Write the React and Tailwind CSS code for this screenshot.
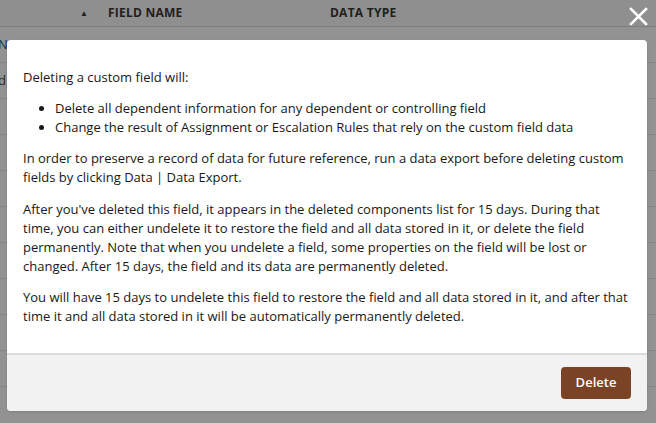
import { useState } from 'react'

const ROWS = Array.from({ length: 10 })

export default function App() {
  const [open, setOpen] = useState(true)

  return (
    <div className="relative w-[656px] h-[423px] overflow-hidden bg-white text-[#3e3e3c] font-['Open_Sans',sans-serif]">
      {/* Table behind the modal */}
      <div className="flex h-[27px] items-center border-b border-[#d8d8d8] bg-[#fafaf9] text-[12px] font-bold uppercase tracking-[0.02em] text-[#2b2826]">
        <span className="ml-[80px] w-[28px] text-[8px]">▲</span>
        <span className="w-[222px]">Field Name</span>
        <span>Data Type</span>
      </div>
      {ROWS.map((_, i) => (
        <div key={i} className="flex h-[36px] items-center border-b border-[#e5e5e5] text-[13px]">
          <span className="-ml-[2px] w-[108px]">{i === 0 ? 'N' : i === 1 ? 'd' : ''}</span>
        </div>
      ))}

      {/* Backdrop */}
      <div className="absolute inset-0 bg-[rgba(24,24,24,0.47)]" />

      <button onClick={() => setOpen(!open)} className="absolute right-[8px] top-[7px] text-white">
        <svg width="19" height="19" viewBox="0 0 19 19">
          <path d="M2 2 L17 17 M17 2 L2 17" stroke="white" strokeWidth="2.6" strokeLinecap="square" />
        </svg>
      </button>

      {/* Modal */}
      <div className="absolute left-[7px] top-[40px] w-[640px] h-[371px] flex flex-col rounded-[4px] bg-white overflow-hidden shadow-sm">
        <div className="flex-1 px-[16px] pt-[28px] text-[13px] leading-[19px] text-[#181818]">
          <p>Deleting a custom field will:</p>
          <ul className="mt-[12px] ml-[32px] list-disc">
            <li>Delete all dependent information for any dependent or controlling field</li>
            <li>Change the result of Assignment or Escalation Rules that rely on the custom field data</li>
          </ul>
          <p className="mt-[12px]">
            In order to preserve a record of data for future reference, run a data export before deleting custom fields by clicking Data | Data Export.
          </p>
          <p className="mt-[13px]">
            After you've deleted this field, it appears in the deleted components list for 15 days. During that time, you can either undelete it to restore the field and all data stored in it, or delete the field permanently. Note that when you undelete a field, some properties on the field will be lost or changed. After 15 days, the field and its data are permanently deleted.
          </p>
          <p className="mt-[12px]">
            You will have 15 days to undelete this field to restore the field and all data stored in it, and after that time it and all data stored in it will be automatically permanently deleted.
          </p>
        </div>
        <div className="flex h-[58px] items-center justify-end border-t-2 border-[#dddbda] bg-[#f3f2f2] px-[16px]">
          <button className="h-[32px] w-[70px] rounded-[4px] bg-[#7b4326] text-[13px] font-semibold text-white">
            Delete
          </button>
        </div>
      </div>
    </div>
  )
}
